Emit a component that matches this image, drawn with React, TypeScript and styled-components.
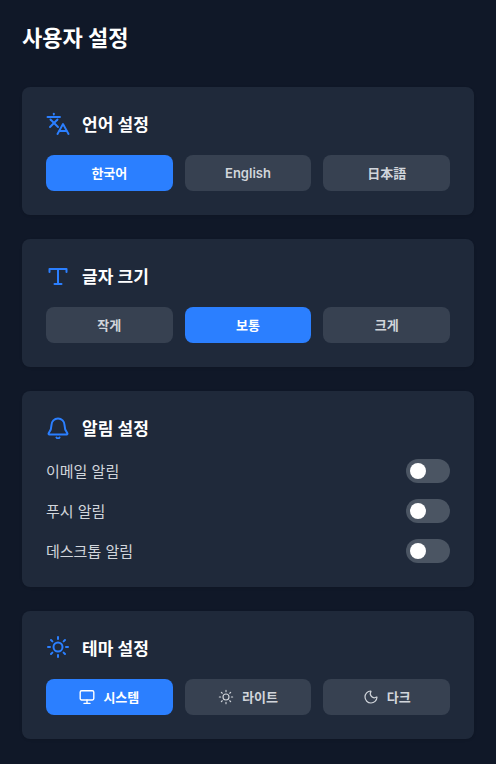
import styled, {createGlobalStyle} from 'styled-components';
import {Moon} from 'lucide-react';
import type {ReactNode} from 'react';

const GlobalStyle = createGlobalStyle`
  html, body {
    margin: 0;
    padding: 0;
    background: #101828;
  }

  body {
    font-family: Inter, "Noto Sans CJK KR", "Noto Sans CJK JP", sans-serif;
  }
`;

const Page = styled.div`
  box-sizing: border-box;
  width: 496px;
  min-height: 764px;
  padding: 24px 22px;
  background: #101828;
`;

const Heading = styled.h1`
  margin: 0 0 35px;
  font-size: 22px;
  line-height: 28px;
  font-weight: 700;
  color: #fff;
`;

const Sections = styled.div`
  display: flex;
  flex-direction: column;
  gap: 24px;
`;

const Card = styled.section`
  padding: 24px;
  border-radius: 8px;
  background: #1f293a;
  box-shadow: 0 1px 3px rgba(0, 0, 0, 0.1);
`;

const CardHeader = styled.div`
  display: flex;
  align-items: center;
  gap: 12px;
  height: 24px;
  margin-bottom: 20px;
  color: #2b7fff;

  svg {
    flex: none;
    width: 24px;
    height: 24px;
  }
`;

const CardTitle = styled.h2`
  margin: 0;
  padding-top: 3px;
  font-size: 17px;
  line-height: 24px;
  font-weight: 600;
  color: #fff;
`;

const Options = styled.div`
  display: grid;
  grid-template-columns: repeat(3, 1fr);
  gap: 12px;
`;

const Option = styled.button<{ $active?: boolean }>`
  display: flex;
  align-items: center;
  justify-content: center;
  gap: 8px;
  height: 36px;
  padding: 0;
  border: 0;
  border-radius: 8px;
  font-family: inherit;
  font-size: 13px;
  font-weight: 600;
  background: ${p => (p.$active ? '#2b7fff' : '#374151')};
  color: ${p => (p.$active ? '#fff' : '#d1d5db')};

  svg {
    width: 16px;
    height: 16px;
  }
`;

const CjkLabel = styled.span`
  padding-bottom: 2px;
`;

const ToggleList = styled.div`
  display: flex;
  flex-direction: column;
  gap: 16px;
`;

const ToggleRow = styled.div`
  display: flex;
  align-items: center;
  justify-content: space-between;
  height: 24px;
  font-size: 15px;
  color: #d1d5db;
`;

const ToggleLabel = styled.span`
  padding-bottom: 2px;
`;

const Toggle = styled.span`
  display: flex;
  align-items: center;
  box-sizing: border-box;
  width: 44px;
  height: 24px;
  padding: 0 4px;
  border-radius: 12px;
  background: #4b5563;

  &::before {
    content: "";
    width: 16px;
    height: 16px;
    border-radius: 50%;
    background: #fff;
  }
`;

function LanguageIcon() {
    return (
        <svg viewBox="0 0 24 24" fill="none" stroke="currentColor" strokeWidth="1.9" strokeLinecap="round" strokeLinejoin="round">
            <path d="M1.5 6h12.5"/>
            <path d="M7.8 2.6v1"/>
            <path d="M4.5 8.5l7.5 7.5"/>
            <path d="M11.5 8.5L4 16"/>
            <path d="M11.5 23L17 13l5.5 10"/>
            <path d="M13.5 20h7"/>
        </svg>
    );
}

function TextSizeIcon() {
    return (
        <svg viewBox="0 0 24 24" fill="none" stroke="currentColor" strokeWidth="2" strokeLinecap="round" strokeLinejoin="round">
            <path d="M3.5 9V6h17v3"/>
            <path d="M12 6v15"/>
            <path d="M8.5 21h7"/>
        </svg>
    );
}

function BellIcon() {
    return (
        <svg viewBox="0 0 24 24" fill="none" stroke="currentColor" strokeWidth="2" strokeLinecap="round" strokeLinejoin="round">
            <path d="M12 3.5a6.5 6.5 0 0 0-6.5 6.5c0 3.8-1 6-2.8 8.2-.4.5 0 1.3.6 1.3h17.4c.6 0 1-.8.6-1.3-1.8-2.2-2.8-4.4-2.8-8.2A6.5 6.5 0 0 0 12 3.5z"/>
            <path d="M10.5 22.5c.4.6.9 1 1.5 1s1.1-.4 1.5-1"/>
        </svg>
    );
}

function SunIcon({strokeWidth = 2}: { strokeWidth?: number }) {
    return (
        <svg viewBox="0 0 24 24" fill="none" stroke="currentColor" strokeWidth={strokeWidth} strokeLinecap="round">
            <circle cx="12" cy="12" r="4.5"/>
            <path d="M12 2v2M12 20v2M2 12h2M20 12h2M5 5l1.4 1.4M17.6 17.6L19 19M5 19l1.4-1.4M17.6 6.4L19 5"/>
        </svg>
    );
}

function MonitorIcon() {
    return (
        <svg viewBox="0 0 16 16" fill="none" stroke="currentColor" strokeWidth="1.4" strokeLinecap="round" strokeLinejoin="round">
            <rect x="1.2" y="1.8" width="13.6" height="9.2" rx="1.4"/>
            <path d="M8 11v3"/>
            <path d="M5 14.4h6"/>
        </svg>
    );
}

function SettingCard({icon, title, children}: { icon: ReactNode; title: string; children: ReactNode }) {
    return (
        <Card>
            <CardHeader>
                {icon}
                <CardTitle>{title}</CardTitle>
            </CardHeader>
            {children}
        </Card>
    );
}

export default function App() {
    return (
        <Page>
            <GlobalStyle/>
            <Heading>사용자 설정</Heading>
            <Sections>
                <SettingCard icon={<LanguageIcon/>} title="언어 설정">
                    <Options>
                        <Option $active><CjkLabel>한국어</CjkLabel></Option>
                        <Option>English</Option>
                        <Option><CjkLabel>日本語</CjkLabel></Option>
                    </Options>
                </SettingCard>
                <SettingCard icon={<TextSizeIcon/>} title="글자 크기">
                    <Options>
                        <Option><CjkLabel>작게</CjkLabel></Option>
                        <Option $active><CjkLabel>보통</CjkLabel></Option>
                        <Option><CjkLabel>크게</CjkLabel></Option>
                    </Options>
                </SettingCard>
                <SettingCard icon={<BellIcon/>} title="알림 설정">
                    <ToggleList>
                        {['이메일 알림', '푸시 알림', '데스크톱 알림'].map(label => (
                            <ToggleRow key={label}>
                                <ToggleLabel>{label}</ToggleLabel>
                                <Toggle/>
                            </ToggleRow>
                        ))}
                    </ToggleList>
                </SettingCard>
                <SettingCard icon={<SunIcon/>} title="테마 설정">
                    <Options>
                        <Option $active><MonitorIcon/><CjkLabel>시스템</CjkLabel></Option>
                        <Option><SunIcon strokeWidth={1.7}/><CjkLabel>라이트</CjkLabel></Option>
                        <Option><Moon strokeWidth={1.8}/><CjkLabel>다크</CjkLabel></Option>
                    </Options>
                </SettingCard>
            </Sections>
        </Page>
    );
}
